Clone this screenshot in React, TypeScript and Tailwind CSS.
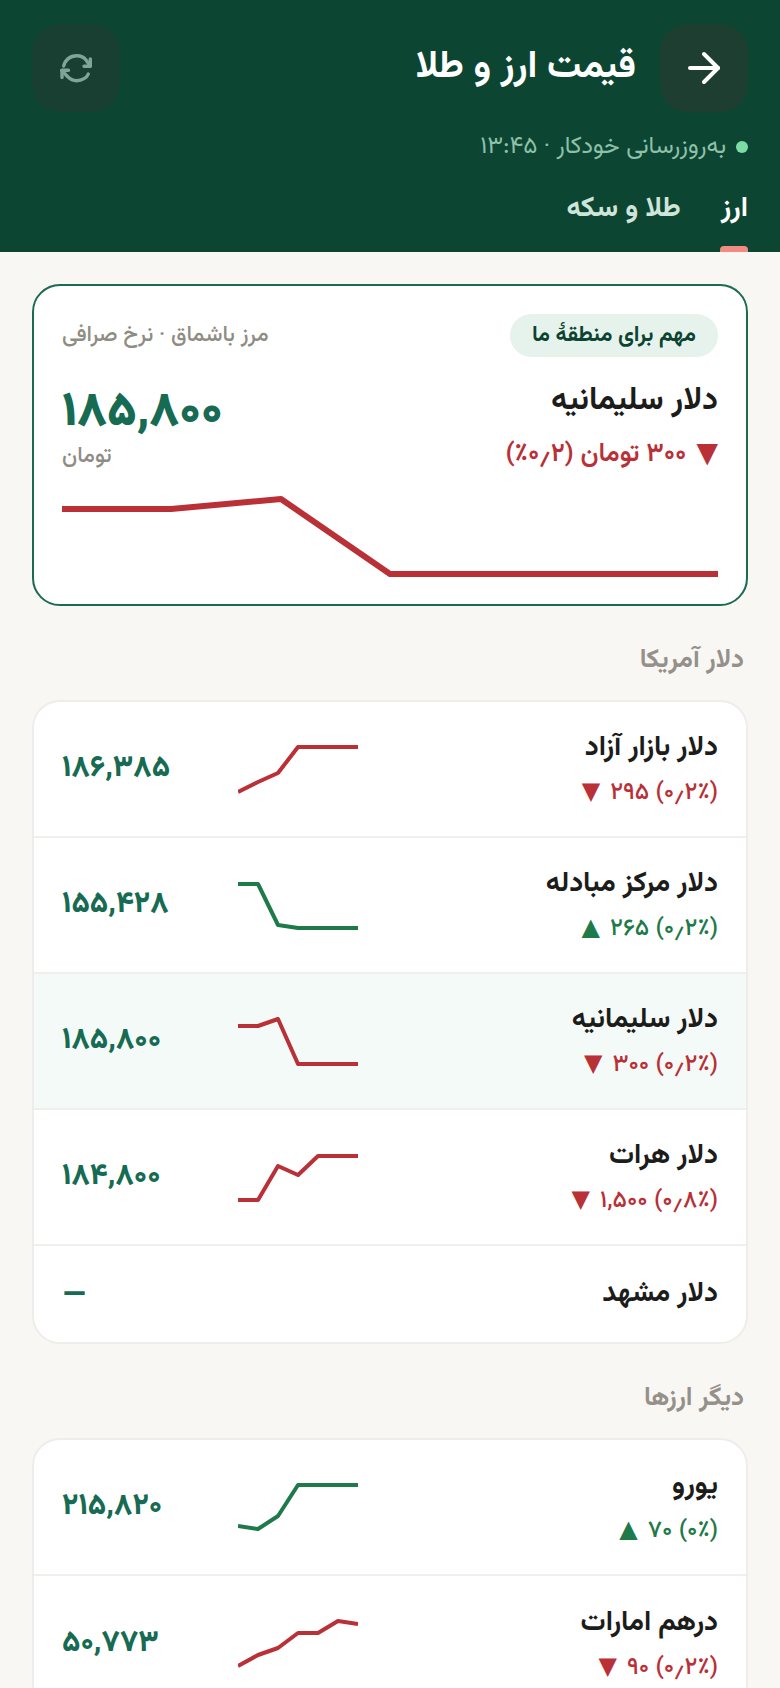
import React from "react";
import { ArrowRight } from "lucide-react";

const RED = "#b93037";
const GREEN = "#1f7a4a";

type Row = { name: string; change?: string; up?: boolean; price: string; pts?: number[]; hl?: boolean };

const usd: Row[] = [
  { name: "دلار بازار آزاد", change: "(۰٫۲٪) ۲۹۵", price: "۱۸۶,۳۸۵", pts: [51, 41, 32, 6, 6, 6, 6] },
  { name: "دلار مرکز مبادله", change: "(۰٫۲٪) ۲۶۵", up: true, price: "۱۵۵,۴۲۸", pts: [7, 7, 48, 51, 51, 51, 51] },
  { name: "دلار سلیمانیه", change: "(۰٫۲٪) ۳۰۰", price: "۱۸۵,۸۰۰", pts: [13, 13, 6, 51, 51, 51, 51], hl: true },
  { name: "دلار هرات", change: "(۰٫۸٪) ۱,۵۰۰", price: "۱۸۴,۸۰۰", pts: [51, 51, 17, 26, 7, 7, 7] },
  { name: "دلار مشهد", price: "–" },
];
const other: Row[] = [
  { name: "یورو", change: "(۰٪) ۷۰", up: true, price: "۲۱۵,۸۲۰", pts: [47, 50, 37, 6, 6, 6, 6] },
  { name: "درهم امارات", change: "(۰٫۲٪) ۹۰", price: "۵۰,۷۷۳", pts: [50, 39, 32, 17, 17, 5, 8] },
];

function Spark({ pts, color }: { pts: number[]; color: string }) {
  return (
    <svg width="120" height="56" viewBox="0 0 120 56" fill="none" className="shrink-0">
      <polyline points={pts.map((y, i) => `${i * 20},${y}`).join(" ")} stroke={color} strokeWidth="4" strokeLinejoin="round" />
    </svg>
  );
}

function PriceRow({ r, last }: { r: Row; last: boolean }) {
  const color = r.up ? GREEN : RED;
  return (
    <div className={`flex items-center px-[28px] ${r.change ? "h-[136px]" : "h-[96px]"} ${r.hl ? "bg-[#f4faf7]" : ""} ${last ? "" : "border-b-2 border-[#f0efeb]"}`}>
      <div className="flex-1 flex flex-col gap-[13px]">
        <div className="text-[28px] leading-[34px] font-bold text-[#1c1c1a]">{r.name}</div>
        {r.change && (
          <div className="flex items-center gap-[10px] text-[24px] leading-[30px] font-medium" style={{ color }}>
            <span>{r.change}</span>
            <span className="text-[24px] leading-[30px]">{r.up ? "▲" : "▼"}</span>
          </div>
        )}
      </div>
      {r.pts && <Spark pts={r.pts} color={color} />}
      <div className={`w-[176px] text-left leading-[40px] text-[#166b52] ${r.change ? "text-[30px] font-extrabold" : "text-[38px] font-semibold"}`}>{r.price}</div>
    </div>
  );
}

function Section({ title, rows }: { title: string; rows: Row[] }) {
  return (
    <div>
      <div className="px-[4px] text-[26px] leading-[30px] font-bold text-[#95918a] mb-[24px]">{title}</div>
      <div className="bg-white rounded-[28px] border-2 border-[#eeede9] overflow-hidden">
        {rows.map((r, i) => (
          <PriceRow key={r.name} r={r} last={i === rows.length - 1} />
        ))}
      </div>
    </div>
  );
}

export default function App() {
  return (
    <div dir="rtl" className="w-[780px] h-[1688px] overflow-hidden bg-[#f8f7f3] font-['Vazirmatn','Noto_Sans','DejaVu_Sans',sans-serif]">
      <header className="h-[252px] bg-[#0c4632] px-[32px] pt-[24px] overflow-hidden">
        <div className="flex items-center gap-[24px]">
          <button className="w-[88px] h-[88px] rounded-[28px] bg-[#1e3e32] flex items-center justify-center text-white">
            <ArrowRight size={48} strokeWidth={2} />
          </button>
          <h1 className="flex-1 text-[38px] leading-[44px] font-bold text-white">قیمت ارز و طلا</h1>
          <button className="w-[88px] h-[88px] rounded-[28px] bg-[#183f31] flex items-center justify-center text-[#7fa597]">
            <svg width="40" height="40" viewBox="36 33 40 40" fill="none" stroke="currentColor" strokeWidth="3.4" strokeLinecap="round" strokeLinejoin="round">
              <path d="M43.7 51C45 45 50 40.7 56.7 40.7C60.5 40.7 64 42.2 66 45L70.3 51" />
              <path d="M70.3 44V51.3H64" />
              <path d="M68.3 59C67 62.5 62 65.7 56.7 65.7C53 65.7 50 64.2 47.7 61.7L41.7 55.5" />
              <path d="M42 62.5V55.3H48.5" />
            </svg>
          </button>
        </div>
        <div className="mt-[20px] flex items-center gap-[10px] text-[24px] leading-[30px] text-[#8fc0ab]">
          <span className="w-[12px] h-[12px] rounded-full bg-[#7ddba6]" />
          <span>به‌روزرسانی خودکار · ۱۳:۴۵</span>
        </div>
        <div className="mt-[29px] flex gap-[40px] text-[28px] leading-[36px] font-bold">
          <div className="relative text-white">
            ارز
            <span className="absolute right-0 top-[55px] w-[28px] h-[12px] rounded-t-[4px] bg-[#f28b82]" />
          </div>
          <div className="text-[#cfe5da]">طلا و سکه</div>
        </div>
      </header>
      <main className="px-[32px] pt-[32px] flex flex-col gap-[40px]">
        <section className="bg-white rounded-[28px] border-2 border-[#1a6b52] px-[28px] pt-[28px] h-[322px]">
          <div className="flex items-center justify-between">
            <span className="h-[43px] px-[22px] rounded-full bg-[#e6f2ec] text-[#0d4431] text-[22px] font-bold flex items-center">مهم برای منطقهٔ ما</span>
            <span className="text-[22px] font-medium text-[#8f8c84]">مرز باشماق · نرخ صرافی</span>
          </div>
          <div className="mt-[24px] flex justify-between">
            <div className="flex flex-col gap-[18px]">
              <div className="text-[32px] leading-[40px] font-bold text-[#1c1c1a]">دلار سلیمانیه</div>
              <div className="flex items-center gap-[10px] text-[26px] leading-[32px] font-semibold" style={{ color: RED }}>
                <span className="text-[28px] leading-[32px]">▼</span>
                <span>۳۰۰ تومان (۰٫۲٪)</span>
              </div>
            </div>
            <div className="flex flex-col items-end pt-[4px]">
              <div className="text-[48px] leading-[58px] font-black text-[#166b52]">۱۸۵,۸۰۰</div>
              <div className="text-[22px] leading-[28px] font-medium text-[#8f8c84] text-left w-full">تومان</div>
            </div>
          </div>
          <svg width="656" height="90" viewBox="0 0 656 90" fill="none" className="mt-[20px]">
            <polyline points="0,18 109,18 219,8 328,83 656,83" stroke={RED} strokeWidth="6" strokeLinejoin="round" />
          </svg>
        </section>
        <Section title="دلار آمریکا" rows={usd} />
        <Section title="دیگر ارزها" rows={other} />
      </main>
    </div>
  );
}
